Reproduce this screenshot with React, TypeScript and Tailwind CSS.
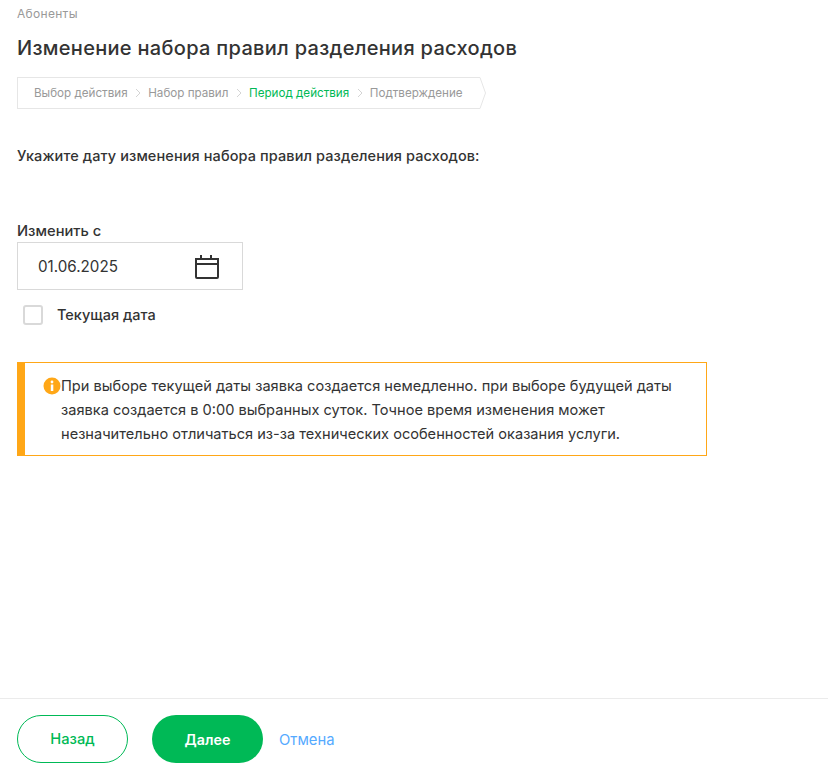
const Chevron = () => (
  <svg width="6" height="10" viewBox="0 0 6 10" fill="none" className="mx-[7.3px] mt-[-1px] shrink-0">
    <path d="M1 1l4 4-4 4" stroke="#d4d4d4" strokeWidth="1" />
  </svg>
);

const steps = ['Выбор действия', 'Набор правил', 'Период действия', 'Подтверждение'];

export default function App() {
  return (
    <div className="h-[771px] w-[828px] flex flex-col bg-white text-[#333333] font-['Inter','Noto_Sans',sans-serif] overflow-hidden">
      <div className="flex-1 pl-[17px]">
        <div className="pt-[7px] text-[12px] leading-[14px] tracking-[0.3px] text-[#999999]">Абоненты</div>
        <h1 className="mt-[13px] text-[20px] leading-[28px] font-medium tracking-[0.3px] text-[#333333]">
          Изменение набора правил разделения расходов
        </h1>

        <div className="relative mt-[15px] flex h-[32px] w-[463px] items-center border border-r-0 border-[#e6e6e6] pl-[16px] pt-[2px] text-[11.65px] text-[#999999]">
          {steps.map((s, i) => (
            <div key={s} className="flex items-center">
              {i > 0 && <Chevron />}
              <span className={i === 2 ? 'text-[#00b956]' : ''}>{s}</span>
            </div>
          ))}
          <svg width="8" height="32" viewBox="0 0 8 32" fill="none" className="absolute right-[-7px] top-[-1px]">
            <path d="M0 .5h1L6.500 16 1 31.500H0" stroke="#e6e6e6" />
          </svg>
        </div>

        <p className="mt-[37px] text-[14.5px] leading-[20px] font-medium tracking-[0.1px] text-[#333333]">
          Укажите дату изменения набора правил разделения расходов:
        </p>

        <div className="mt-[55px] text-[14.7px] leading-[20px] font-medium">Изменить с</div>
        <div className="mt-[1px] flex h-[48px] w-[226px] items-center justify-between border border-[#d9d9d9] pl-[20px] pr-[22px]">
          <span className="mt-[2px] text-[15.2px] text-[#333333]">01.06.2025</span>
          <svg width="26" height="28" viewBox="0 0 26 28" fill="none" stroke="#333333" strokeWidth="2">
            <path d="M2 12h22M2 7h22v18a1 1 0 0 1-1 1H3a1 1 0 0 1-1-1V7zM7 3v4M17 3v4" />
          </svg>
        </div>

        <label className="mt-[14px] ml-[6px] flex items-center">
          <span className="h-[20px] w-[20px] rounded-[3px] border-2 border-[#d9d9d9] bg-white" />
          <span className="ml-[14px] text-[14.5px] font-medium">Текущая дата</span>
        </label>

        <div className="mt-[36px] flex h-[94px] w-[690px] border border-l-[8px] border-[#ffa717] pt-[11px] pl-[18px] pr-[20px]">
          <svg width="18" height="18" viewBox="0 0 18 18" className="mt-[3px] shrink-0">
            <circle cx="9" cy="9" r="8.500" fill="#ffa717" />
            <rect x="7.800" y="7.500" width="2.500" height="6.500" fill="#ffffff" />
            <circle cx="9" cy="5" r="1.400" fill="#ffffff" />
          </svg>
          <p className="text-[14.6px] leading-[24px] text-[#333333]">
            При выборе текущей даты заявка создается немедленно. при выборе будущей даты заявка создается в 0:00 выбранных суток. Точное время изменения может незначительно отличаться из-за технических особенностей оказания услуги.
          </p>
        </div>
      </div>

      <div className="flex h-[73px] items-start border-t border-[#ebebeb] pl-[17px] pt-[16px]">
        <button className="h-[48px] w-[111px] rounded-full border border-[#00b956] bg-white pt-[1px] text-[14.7px] font-medium text-[#00b956]">Назад</button>
        <button className="ml-[24px] h-[48px] w-[111px] rounded-full bg-[#00b956] pt-[1px] text-[14.3px] font-semibold text-white">Далее</button>
        <a className="ml-[16px] mt-[15px] text-[14.8px] leading-[20px] text-[#55aaff]">Отмена</a>
      </div>
    </div>
  );
}
